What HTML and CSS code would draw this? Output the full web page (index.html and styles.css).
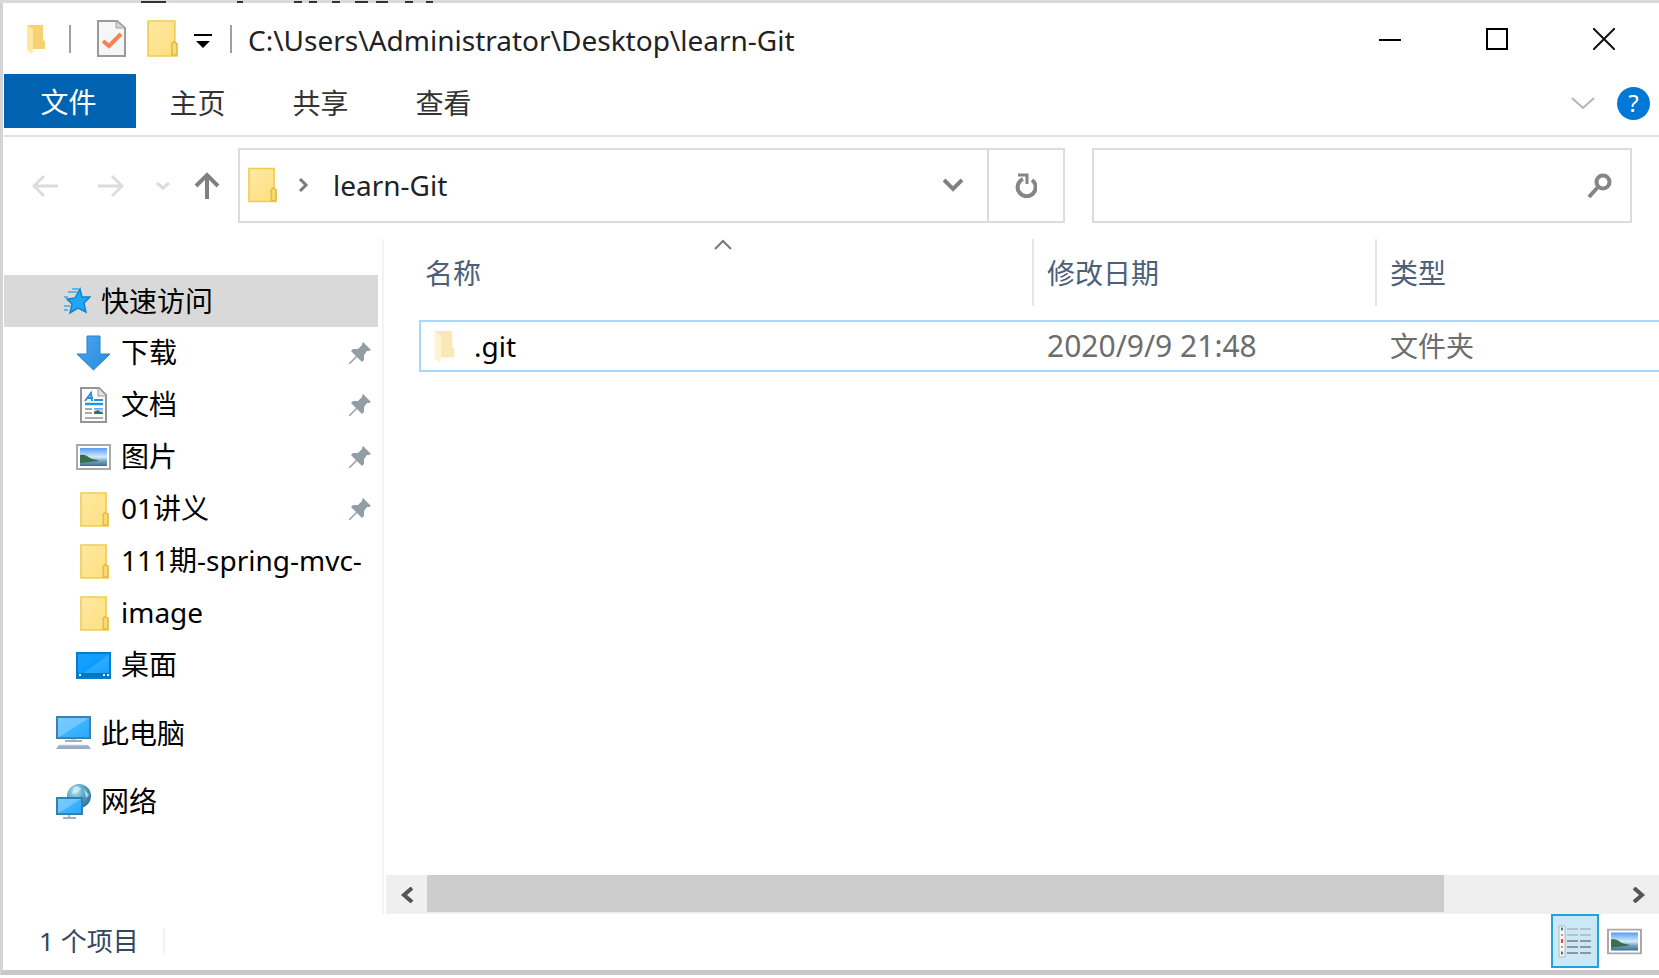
FILE: index.html
```html
<!DOCTYPE html>
<html lang="zh-CN">
<head>
<meta charset="utf-8">
<title>learn-Git</title>
<link rel="stylesheet" href="styles.css">
</head>
<body>
<svg class="defs" aria-hidden="true">
  <defs>
    <linearGradient id="gFolder" x1="0" y1="0" x2="1" y2="1"><stop offset="0" stop-color="#ffe9a2"/><stop offset="1" stop-color="#fddf7e"/></linearGradient>
    <linearGradient id="gSky" x1="0" y1="0" x2="0" y2="1"><stop offset="0" stop-color="#5b9bf5"/><stop offset=".5" stop-color="#d3ecf8"/><stop offset=".7" stop-color="#7fa9c4"/><stop offset="1" stop-color="#3b6d93"/></linearGradient>
    <linearGradient id="gScreen" x1="0" y1="0" x2="1" y2="1"><stop offset="0" stop-color="#7accff"/><stop offset=".5" stop-color="#6ac5ff"/><stop offset=".52" stop-color="#3db4fd"/><stop offset="1" stop-color="#27a8f9"/></linearGradient>
    <linearGradient id="gDesk" x1="0" y1="0" x2="1" y2="1"><stop offset="0" stop-color="#1aa3ff"/><stop offset=".5" stop-color="#0c9cff"/><stop offset=".52" stop-color="#2eabff"/><stop offset="1" stop-color="#0c9cff"/></linearGradient>
    <linearGradient id="gArrow" x1="0" y1="0" x2="1" y2="1"><stop offset="0" stop-color="#48a5ef"/><stop offset="1" stop-color="#2c8be0"/></linearGradient>
    <radialGradient id="gGlobe" cx=".35" cy=".3" r=".8"><stop offset="0" stop-color="#b6e3ee"/><stop offset=".5" stop-color="#56a3c4"/><stop offset="1" stop-color="#2b6c8c"/></radialGradient>
    <symbol id="folder" viewBox="0 0 30 36"><path d="M1 1h26v21l2 1v12H1z" fill="url(#gFolder)" stroke="#efcb52" stroke-width="1.6"/><path d="M24 34V23l2-2 3 2v11z" fill="#f6d876" stroke="#e3ba3d" stroke-width="1.4"/></symbol>
    <symbol id="open" viewBox="0 0 20 30"><path d="M1 1h16v15l2 1v8H5z" fill="#f7d272"/><path d="M1 1l6 4v20l-1 5-5-4z" fill="#ffe8a4"/></symbol>
    <symbol id="pin" viewBox="0 0 24 24"><path d="M15 1l8 8-2 1-2 0-3 4 0 5-2 2-5-5-7 7H1v-1l7-7-5-5 2-2h5l4-4V3z" fill="#919ea5"/></symbol>
    <symbol id="photo" viewBox="0 0 35 26"><path d="M1 1h33v24H1z" fill="#fff" stroke="#a9a9a9" stroke-width="2"/><path d="M4 4h27v18H4z" fill="url(#gSky)"/><path d="M4 11c5-1 7 1 10 3s7 1 9 3l-9 1-10 1z" fill="#386f50"/></symbol>
  </defs>
</svg>
<div class="backdrop" aria-hidden="true"><svg width="440" height="3"><path d="M141 2h25M237 2h6M294 2h8M309 2h8M332 2h8M355 2h13M376 2h12M405 2h8M426 2h7" stroke="#333" stroke-width="2"/></svg></div>
<div class="window">
  <header class="titlebar">
    <svg class="i-open" width="20" height="30"><use href="#open"/></svg>
    <span class="sep sep-a"></span>
    <button class="plain" aria-label="属性"><svg width="29" height="37" viewBox="0 0 29 37"><path d="M1 1h19l8 7v28H1z" fill="#f5f6f7" stroke="#9a9a9a" stroke-width="2"/><path d="M19 1v7h9z" fill="#d5d5d5" stroke="#a5a5a5"/><path d="M6 21l6 5L24 14" fill="none" stroke="#fb8050" stroke-width="4"/></svg></button>
    <button class="plain qa-folder" aria-label="新建文件夹"><svg width="31" height="37" viewBox="0 0 30 36"><use href="#folder"/></svg></button>
    <button class="plain qa-more" aria-label="自定义快速访问工具栏"><svg width="18" height="14" viewBox="0 0 18 14"><path d="M0 1h18" stroke="#000" stroke-width="2"/><path d="M2 7h14l-7 7z"/></svg></button>
    <span class="sep sep-b"></span>
    <h1 class="path">C:\Users\Administrator\Desktop\learn-Git</h1>
    <div class="controls">
      <button class="plain" aria-label="最小化"><svg width="22" height="22"><path d="M0 12h22" stroke="#000" stroke-width="2"/></svg></button>
      <button class="plain" aria-label="最大化"><svg width="22" height="22"><path d="M1 1h20v20H1z" fill="none" stroke="#000" stroke-width="2"/></svg></button>
      <button class="plain" aria-label="关闭"><svg width="22" height="22"><path d="M0 0l22 22M22 0L0 22" stroke="#111" stroke-width="2"/></svg></button>
    </div>
  </header>
  <nav class="ribbon">
    <button class="tab tab-file">文件</button>
    <button class="tab">主页</button>
    <button class="tab">共享</button>
    <button class="tab">查看</button>
    <div class="ribbon-end">
      <button class="plain" aria-label="展开功能区"><svg width="24" height="13"><path d="M1 1l11 10L23 1" fill="none" stroke="#b5b5b5" stroke-width="2"/></svg></button>
      <button class="plain help" aria-label="帮助">?</button>
    </div>
  </nav>
  <div class="navbar">
    <div class="history">
      <button class="plain" aria-label="后退" disabled><svg width="27" height="24"><path d="M26 12H2M12 2L2 12l10 10" fill="none" stroke="#dcdcdc" stroke-width="3"/></svg></button>
      <button class="plain" aria-label="前进" disabled><svg width="27" height="24"><path d="M1 12h24M15 2l10 10-10 10" fill="none" stroke="#dcdcdc" stroke-width="3"/></svg></button>
      <button class="plain recent" aria-label="最近浏览的位置" disabled><svg width="14" height="10"><path d="M1 2l6 5 6-5" fill="none" stroke="#dcdcdc" stroke-width="3"/></svg></button>
      <button class="plain" aria-label="上移"><svg width="26" height="28"><path d="M13 27V3M2 14L13 3l11 11" fill="none" stroke="#808080" stroke-width="4"/></svg></button>
    </div>
    <div class="address">
      <svg width="29" height="36"><use href="#folder"/></svg>
      <svg class="crumb-arrow" width="11" height="16"><path d="M2 2l6 6-6 6" fill="none" stroke="#7b7b7b" stroke-width="3"/></svg>
      <a class="crumb" href="#">learn-Git</a>
      <button class="plain drop" aria-label="历史记录"><svg width="20" height="14"><path d="M1 2l9 9 9-9" fill="none" stroke="#808080" stroke-width="4"/></svg></button>
    </div>
    <button class="refresh" aria-label="刷新"><svg width="22" height="25"><path d="M17 7A9 9 0 1 1 8 6" fill="none" stroke="#858585" stroke-width="4"/><path d="M3 2h9v9" fill="none" stroke="#858585" stroke-width="3"/></svg></button>
    <label class="search"><input type="search" aria-label="搜索"><svg width="26" height="26"><circle cx="16" cy="9" r="6.500" fill="none" stroke="#858585" stroke-width="4"/><path d="M11 14L2 24" stroke="#858585" stroke-width="4"/></svg></label>
  </div>
  <div class="body">
    <nav class="tree">
      <a class="node selected" href="#"><svg width="35" height="30" viewBox="0 0 35 30"><path d="M24 3l2 8h8l-6 6 2 9-8-4-8 5 2-9-5-5 8-1z" fill="#1fa6f5" stroke="#1583cd" stroke-width="1.500"/><path d="M16 3h7M12 6h9M8 11h4M8 20h6M8 24h4" stroke="#3ea9e6" stroke-width="1.500"/></svg><span>快速访问</span></a>
      <a class="node sub" href="#"><svg width="35" height="36" viewBox="0 0 35 36"><path d="M11 1h13v18h10L17.500 35 1 19h10z" fill="url(#gArrow)" stroke="#2a82cf"/></svg><span>下载</span><svg class="pin" width="24" height="24"><use href="#pin"/></svg></a>
      <a class="node sub" href="#"><svg width="35" height="36" viewBox="0 0 35 36"><path d="M5 1h18l7 7v27H5z" fill="#fff" stroke="#949494" stroke-width="2"/><path d="M22 1v8h8" fill="#e4e4e4" stroke="#999"/><path d="M9 14l6-8 1 8M11 11h6M18 13h9" fill="none" stroke="#2a8ed0" stroke-width="2"/><path d="M9 17h18" stroke="#1c9ae0" stroke-width="2.500"/><path d="M9 22h7M9 26h7M9 31h18" stroke="#aaa" stroke-width="2"/><path d="M18 21h9v6h-9z" fill="url(#gSky)"/><path d="M18 25l4-2 5 4h-9z" fill="#386f50"/></svg><span>文档</span><svg class="pin" width="24" height="24"><use href="#pin"/></svg></a>
      <a class="node sub" href="#"><svg width="35" height="26"><use href="#photo"/></svg><span>图片</span><svg class="pin" width="24" height="24"><use href="#pin"/></svg></a>
      <a class="node sub" href="#"><svg width="35" height="35"><use href="#folder" x="4" width="29" height="35"/></svg><span>01讲义</span><svg class="pin" width="24" height="24"><use href="#pin"/></svg></a>
      <a class="node sub" href="#"><svg width="35" height="35"><use href="#folder" x="4" width="29" height="35"/></svg><span>111期-spring-mvc-</span></a>
      <a class="node sub" href="#"><svg width="35" height="35"><use href="#folder" x="4" width="29" height="35"/></svg><span>image</span></a>
      <a class="node sub" href="#"><svg width="35" height="27" viewBox="0 0 35 27"><path d="M1 1h33v25H1z" fill="url(#gDesk)" stroke="#087cc8" stroke-width="2"/><path d="M2 21h31v4H2z" fill="#0876b8"/><path d="M3 23h2M27 23h2M31 23h2" stroke="#e2f5ff" stroke-width="2"/></svg><span>桌面</span></a>
      <a class="node top" href="#"><svg width="35" height="34" viewBox="0 0 35 34"><path d="M1 1h33v21H1z" fill="url(#gScreen)" stroke="#3d82ad" stroke-width="2"/><path d="M15 23h5v2h-5z" fill="#c5d0d9"/><path d="M9 25h17" stroke="#9db2c4" stroke-width="2"/><path d="M3 29h29l3 4H0z" fill="#9aaec3"/><path d="M4 29h27" stroke="#d8e0e8"/></svg><span>此电脑</span></a>
      <a class="node top" href="#"><svg width="35" height="35" viewBox="0 0 35 35"><circle cx="23" cy="12" r="12" fill="url(#gGlobe)"/><path d="M18 3c3-2 6 0 7 2l-4 4-5 1zM28 5l5 6-3 3z" fill="#dcf2f4" opacity=".7"/><path d="M1 14h25v16H1z" fill="url(#gScreen)" stroke="#3180ad" stroke-width="2"/><path d="M13 31v3M7 34h13" stroke="#9db2c4" stroke-width="2"/></svg><span>网络</span></a>
    </nav>
    <main class="pane">
      <table class="files">
        <colgroup><col class="c-name"><col class="c-date"><col></colgroup>
        <thead><tr><th><svg class="sort" width="18" height="11"><path d="M1 10l8-8 8 8" fill="none" stroke="#777" stroke-width="2"/></svg>名称</th><th>修改日期</th><th>类型</th></tr></thead>
        <tbody><tr><td><div class="file"><svg class="hidden-item" width="23" height="33" viewBox="0 0 20 30"><use href="#open"/></svg><span>.git</span></div></td><td class="date">2020/9/9 21:48</td><td>文件夹</td></tr></tbody>
      </table>
      <div class="scrollbar">
        <button class="plain" aria-label="向左滚动"><svg width="14" height="16"><path d="M12 1L4 8l8 7" fill="none" stroke="#555" stroke-width="4"/></svg></button>
        <div class="track"><div class="thumb"></div></div>
        <button class="plain" aria-label="向右滚动"><svg width="14" height="16"><path d="M2 1l8 7-8 7" fill="none" stroke="#555" stroke-width="4"/></svg></button>
      </div>
    </main>
  </div>
  <footer class="status">
    <span class="count">1 个项目</span>
    <button class="view active" aria-label="详细信息"><svg width="34" height="33" viewBox="0 0 34 33"><path d="M1 1h6v31H1z" fill="#f8f8f8" stroke="#b5b5b5"/><path d="M9 4h11M22 4h11M9 10h11M22 10h11" stroke="#b3c2ca" stroke-width="2"/><path d="M9 16h11M22 16h11M9 22h11M22 22h11M9 28h11M22 28h11" stroke="#8b979e" stroke-width="2"/><path d="M3 4h2M3 28h2" stroke="#397ca0" stroke-width="3"/><path d="M3 10h2M3 22h2" stroke="#c49b62" stroke-width="2"/><path d="M3 16h2" stroke="#e0523c" stroke-width="4"/></svg></button>
    <button class="view" aria-label="大图标"><svg width="35" height="27" viewBox="0 0 35 26"><use href="#photo"/></svg></button>
  </footer>
</div>
</body>
</html>
```
FILE: styles.css
```css
* { box-sizing: border-box; }
body {
  margin: 0;
  min-height: 100vh;
  display: flex;
  flex-direction: column;
  background: #fff;
  color: #000;
  font: 28px/36px "Noto Sans", "Noto Sans CJK SC", sans-serif;
}
svg { display: block; flex: none; }
.defs { position: absolute; width: 0; height: 0; }
a { color: inherit; text-decoration: none; }
.plain { border: 0; padding: 0; background: none; display: flex; align-items: center; justify-content: center; }
.backdrop { height: 3px; background: #d9dbdb; }
.window {
  flex: 1;
  display: flex;
  flex-direction: column;
  border-left: 3px solid #d4d4d4;
  border-bottom: 5px solid #c8c8c8;
  margin-bottom: 3px;
  padding-left: 1px;
}
.titlebar { height: 71px; display: flex; align-items: center; padding: 0 44px 0 22px; }
.sep { width: 2px; height: 28px; background: #a0a0a0; }
.sep-a { margin: 0 26px 0 23px; }
.qa-folder { margin-left: 21px; }
.qa-more { margin: 4px 18px 0 16px; }
.path { margin: 0; padding: 3px 0 0 16px; font: inherit; color: #222; white-space: nowrap; }
.controls { margin-left: auto; display: flex; gap: 85px; }
.ribbon { display: flex; height: 63px; padding-bottom: 7px; border-bottom: 2px solid #dfe1e1; }
.tab { width: 123px; border: 0; padding: 4px 0 0; background: none; font: inherit; color: #333; }
.tab-file { width: 132px; padding: 2px 3px 0 0; background: #0063b1; color: #fff; }
.ribbon-end { margin-left: auto; display: flex; align-items: center; gap: 22px; padding: 4px 9px 0 0; }
.help { width: 33px; height: 33px; border-radius: 50%; background: #0078d7; color: #fff; font: 24px/32px "Noto Sans", sans-serif; }
.navbar { display: flex; padding: 11px 27px 1px 0; height: 87px; }
.history { width: 234px; display: flex; align-items: center; padding-left: 28px; gap: 38px; }
.recent { margin: 0 -14px 0 -6px; }
.address { flex: 707; display: flex; align-items: center; border: 2px solid #dcdcdc; padding: 0 24px 2px 8px; }
.crumb-arrow { margin: 0 24px 0 21px; }
.crumb { color: #222; }
.drop { margin-left: auto; }
.refresh { width: 76px; border: 2px solid #dcdcdc; border-left: 0; background: #fff; display: flex; align-items: center; justify-content: center; padding: 0; }
.search { flex: 514; margin-left: 27px; border: 2px solid #dcdcdc; display: flex; align-items: center; padding-right: 17px; }
.search input { flex: 1; min-width: 0; height: 100%; border: 0; outline: 0; font: inherit; padding: 0 16px; }
.body { flex: 1; display: flex; padding-top: 15px; }
.tree { width: 374px; flex: none; padding-top: 36px; }
.node { height: 52px; display: flex; align-items: center; padding-left: 52px; gap: 10px; white-space: nowrap; }
.selected { background: #d9d9d9; }
.sub { padding: 0 6px 0 72px; }
.sub span { overflow: hidden; margin-right: -6px; padding-bottom: 2px; }
.pin { margin-left: auto; }
.top { margin-top: 16px; }
.pane { flex: 1; min-width: 0; display: flex; flex-direction: column; margin-left: 4px; border-left: 2px solid #f3f3f3; }
.files { margin-left: 35px; width: calc(100% - 35px); table-layout: fixed; border-collapse: separate; border-spacing: 0; }
.c-name { width: 613px; }
.c-date { width: 343px; }
.files th { position: relative; height: 67px; padding: 0 0 0 6px; font-weight: normal; text-align: left; color: #4c607a; }
.files th + th { border-left: 2px solid #e5e5e5; padding-left: 13px; }
.files tbody::before { content: ""; display: block; height: 14px; }
.files td { height: 52px; padding: 0 0 0 15px; color: #6d6d6d; border: 2px solid #a6d8ff; border-width: 2px 0; white-space: nowrap; }
.files td:first-child { border-left-width: 2px; padding-left: 12px; color: #000; }
.files .date { font-size: 30px; }
.file { display: flex; align-items: center; gap: 18px; }
.hidden-item { opacity: .5; }
.sort { position: absolute; left: 50%; top: 0; margin-left: -12px; }
.scrollbar { margin: auto 0 0 2px; height: 39px; display: flex; background: #efefef; }
.scrollbar .plain { width: 41px; }
.track { flex: 1; }
.thumb { width: 85.4%; height: 37px; background: #cdcdcd; }
.status { height: 56px; display: flex; align-items: center; padding: 0 13px 2px 35px; color: #33475f; }
.count { padding-right: 24px; font-size: 26px; line-height: 26px; border-right: 2px solid #f3f3f3; }
.view { width: 48px; height: 54px; border: 0; padding: 0; background: none; display: flex; align-items: center; justify-content: center; }
.status .view:last-child { width: 43px; }
.active { margin-left: auto; border: 2px solid #26a0da; background: #cbe8f6; margin-right: 4px; }
```
